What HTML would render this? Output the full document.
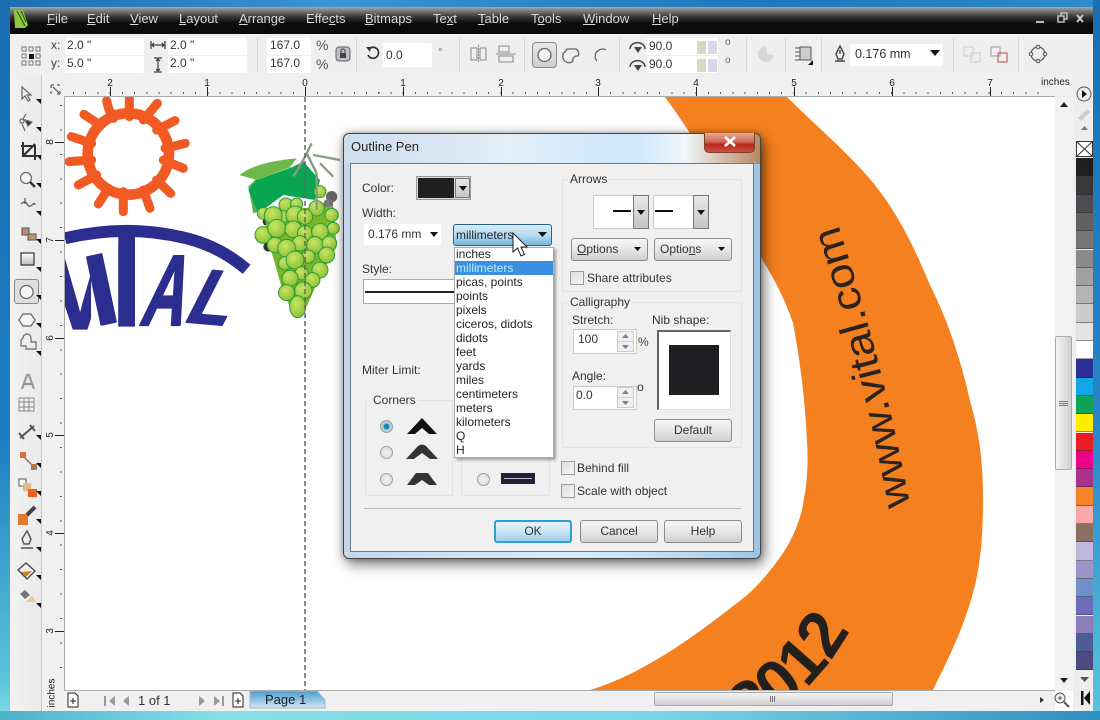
<!DOCTYPE html>
<html><head><meta charset="utf-8"><title>Outline Pen</title>
<style>
html,body{margin:0;padding:0}
body{width:1100px;height:720px;overflow:hidden;position:relative;background:#fff;font-family:"Liberation Sans",sans-serif;font-size:12px;color:#222;filter:blur(.3px)}
div,span.t{position:absolute}
.t{position:absolute;white-space:nowrap;line-height:14px;font-size:12px;color:#333}
.m{top:12px;color:#d8d8d8;font-size:13px}
.m u{text-decoration:underline}
.i{background:#fff;border-radius:1px}
.r{font-size:10px;top:77px;color:#222;transform:translateX(-50%)}
.rv{font-size:10px;left:48px;color:#222;transform:rotate(-90deg)}
.btn{box-sizing:border-box;border:1px solid #8c8c8c;border-radius:3px;background:linear-gradient(#f6f6f6,#e6e6e6 50%,#cfcfcf);text-align:center;line-height:21px;color:#333;font-size:12px}
.grp{box-sizing:border-box;border:1px solid #e2e2e2;border-radius:2px}
.lab{background:#f0f0f0;padding:0 2px}
.li{left:456px;font-size:12px;color:#222}
.sw{left:1076px;width:17px;height:18.3px;box-shadow:inset 0 -1px 0 rgba(40,40,40,.45)}
.cb{box-sizing:border-box;width:14px;height:14px;border:1px solid #9a9a9a;background:linear-gradient(135deg,#ddd,#f6f6f6);border-radius:1px}
.rad{box-sizing:border-box;width:13px;height:13px;border:1px solid #a0a0a0;border-radius:50%;background:radial-gradient(#f4f4f4,#d4d4d4)}
.dd{box-sizing:border-box;background:linear-gradient(#e8e8e8,#c4c4c4);border:1px solid #777}
</style></head><body>

<!-- window frame -->
<div style="left:0;top:0;width:1100px;height:8px;background:linear-gradient(90deg,#1c6eb0,#3a93d4 30%,#1b79bd 70%,#2d8ccb)"></div>
<div style="left:0;top:0;width:10px;height:720px;background:linear-gradient(#1a6fb2,#1b7cc0 60%,#5cc6dc 95%,#86dfe8)"></div>
<div style="left:1093px;top:0;width:7px;height:720px;background:linear-gradient(#1a6fb2,#2a86c8 60%,#5cc6dc)"></div>
<div style="left:0;top:711px;width:1100px;height:9px;background:linear-gradient(90deg,#4bb2cc,#86dfe8 20%,#7ad6e6 60%,#2f8fc0)"></div>

<!-- menu bar -->
<div style="left:10px;top:7px;width:1083px;height:27px;background:linear-gradient(#a8a8a8,#3a3a3a 35%,#0c0c0c 60%,#0a0a0a)"></div>
<svg style="position:absolute;left:13px;top:9px" width="16" height="20" viewBox="0 0 16 20"><path d="M1 1h9l5 15-3 3H2z" fill="#8dc63f"/><path d="M4 2l8 15M8 2l5 11" stroke="#2d5a16" stroke-width="1.2" fill="none"/></svg>
<span class="t m" style="left:47px"><u>F</u>ile</span>
<span class="t m" style="left:87px"><u>E</u>dit</span>
<span class="t m" style="left:130px"><u>V</u>iew</span>
<span class="t m" style="left:179px"><u>L</u>ayout</span>
<span class="t m" style="left:239px"><u>A</u>rrange</span>
<span class="t m" style="left:306px">Effe<u>c</u>ts</span>
<span class="t m" style="left:365px"><u>B</u>itmaps</span>
<span class="t m" style="left:433px">Te<u>x</u>t</span>
<span class="t m" style="left:478px"><u>T</u>able</span>
<span class="t m" style="left:531px">T<u>o</u>ols</span>
<span class="t m" style="left:583px"><u>W</u>indow</span>
<span class="t m" style="left:652px"><u>H</u>elp</span>
<svg style="position:absolute;left:1034px;top:12px" width="56" height="14"><path d="M2 10h8" stroke="#bbb" stroke-width="2"/><path d="M24 4h6v6h-6zM27 4V1h6v6h-3" fill="none" stroke="#bbb" stroke-width="1.6"/><path d="M43 3l6 7M49 3l-6 7" stroke="#ccc" stroke-width="2"/></svg>

<!-- property bar -->
<div style="left:10px;top:34px;width:1083px;height:41px;background:#efefef"></div>
<svg style="position:absolute;left:21px;top:46px" width="20" height="20"><g fill="none" stroke="#777"><rect x="1" y="1" width="4" height="4"/><rect x="8" y="1" width="4" height="4"/><rect x="15" y="1" width="4" height="4"/><rect x="1" y="8" width="4" height="4"/><rect x="15" y="8" width="4" height="4"/><rect x="1" y="15" width="4" height="4"/><rect x="8" y="15" width="4" height="4"/><rect x="15" y="15" width="4" height="4"/></g><rect x="8" y="8" width="5" height="5" fill="#111"/></svg>
<span class="t" style="left:51px;top:38px;color:#444">x:</span><span class="t" style="left:51px;top:56px;color:#444">y:</span>
<div class="i" style="left:65px;top:38px;width:79px;height:17px"></div><div class="i" style="left:65px;top:56px;width:79px;height:17px"></div>
<span class="t" style="left:67px;top:38px">2.0 "</span><span class="t" style="left:67px;top:56px">5.0 "</span>
<div class="i" style="left:168px;top:38px;width:79px;height:17px"></div><div class="i" style="left:168px;top:56px;width:79px;height:17px"></div>
<span class="t" style="left:170px;top:38px">2.0 "</span><span class="t" style="left:170px;top:56px">2.0 "</span>
<svg style="position:absolute;left:150px;top:39px" width="16" height="34"><path d="M1 2v8M15 2v8M2 6h12M4 4L2 6l2 2M12 4l2 2-2 2" fill="none" stroke="#444" stroke-width="1.3"/><path d="M4 19h8M4 33h8M8 20v12M6 22l2-2 2 2M6 30l2 2 2-2" fill="none" stroke="#444" stroke-width="1.3"/></svg>
<div style="left:257px;top:38px;width:1px;height:34px;background:#d8d8d8"></div>
<div class="i" style="left:267px;top:38px;width:44px;height:17px"></div><div class="i" style="left:267px;top:56px;width:44px;height:17px"></div>
<span class="t" style="left:270px;top:38px">167.0</span><span class="t" style="left:270px;top:56px">167.0</span>
<span class="t" style="left:316px;top:38px;font-size:14px;color:#555">%</span><span class="t" style="left:316px;top:57px;font-size:14px;color:#555">%</span>
<svg style="position:absolute;left:335px;top:46px" width="16" height="16"><rect x="1" y="1" width="14" height="14" rx="3" fill="#bdbdc4" stroke="#666"/><rect x="5" y="7" width="6" height="5" fill="#444"/><path d="M6 7V5a2 2 0 014 0v2" fill="none" stroke="#444"/></svg>
<div style="left:356px;top:38px;width:1px;height:34px;background:#d8d8d8"></div>
<svg style="position:absolute;left:365px;top:44px" width="16" height="16"><path d="M4 5a5.500 5.500 0 11-1 6" fill="none" stroke="#333" stroke-width="1.7"/><path d="M1 3l5 0-1 5z" fill="#333"/></svg>
<div class="i" style="left:383px;top:43px;width:49px;height:24px"></div><span class="t" style="left:386px;top:48px">0.0</span>
<span class="t" style="left:438px;top:46px;color:#666;font-size:11px">°</span>
<div style="left:459px;top:38px;width:1px;height:34px;background:#d8d8d8"></div>
<svg style="position:absolute;left:469px;top:44px" width="48" height="20"><g fill="none" stroke="#888"><path d="M2 4h6v12H2zM11 4h6v12h-6z"/><path d="M9.500 1v18" stroke-dasharray="2 1"/><path d="M30 2h10v6H30zM30 12h14v6H30zM27 10h20" /></g></svg>
<div style="left:524px;top:38px;width:1px;height:34px;background:#d8d8d8"></div>
<div style="box-sizing:border-box;left:532px;top:42px;width:25px;height:26px;background:linear-gradient(#e8e8e8,#cfcfcf);border:1px solid #888;border-radius:4px"></div>
<svg style="position:absolute;left:535px;top:45px" width="80" height="20"><path d="M3 10a6.500 6.500 0 1013 0 6.500 6.500 0 10-13 0" fill="#f4f4f4" stroke="#666" stroke-width="1.3"/><path d="M31 6q0-2 2-2h8a5 5 0 012 7l-2 0a4 4 0 00-3 5l-1 1a6 6 0 01-6-11z" fill="none" stroke="#666" stroke-width="1.3"/><path d="M62 16a7 7 0 012-11q4-2 7 0" fill="none" stroke="#666" stroke-width="1.3"/></svg>
<div style="left:619px;top:38px;width:1px;height:34px;background:#d8d8d8"></div>
<svg style="position:absolute;left:628px;top:38px" width="20" height="34"><g fill="none" stroke="#444" stroke-width="1.5"><path d="M2 11a7 6 0 0115 0"/><path d="M2 29a7 6 0 0115 0"/></g><path d="M6 9l4 6 4-6z" fill="#444"/><path d="M6 27l4 6 4-6z" fill="#444"/></svg>
<div class="i" style="left:647px;top:38px;width:71px;height:17px"></div><div class="i" style="left:647px;top:56px;width:71px;height:17px"></div>
<span class="t" style="left:649px;top:39px">90.0</span><span class="t" style="left:649px;top:57px">90.0</span>
<div style="left:697px;top:41px;width:9px;height:13px;background:#d8d8c8"></div><div style="left:708px;top:41px;width:9px;height:13px;background:#d8d8e8"></div>
<div style="left:697px;top:59px;width:9px;height:13px;background:#d8d8c8"></div><div style="left:708px;top:59px;width:9px;height:13px;background:#d8d8e8"></div>
<span class="t" style="left:725px;top:36px;color:#666;font-size:10px">o</span><span class="t" style="left:725px;top:54px;color:#666;font-size:10px">o</span>
<div style="left:746px;top:38px;width:1px;height:34px;background:#d8d8d8"></div>
<svg style="position:absolute;left:757px;top:44px" width="18" height="20"><path d="M9 2a8 8 0 108 9l-7-1z" fill="#d6d6d6"/></svg>
<div style="left:785px;top:38px;width:1px;height:34px;background:#d8d8d8"></div>
<svg style="position:absolute;left:794px;top:44px" width="20" height="22"><rect x="6" y="3" width="11" height="13" fill="#ccc" stroke="#555"/><path d="M1 4h5M1 8h5M1 12h5M1 16h5" stroke="#555"/><path d="M19 16v5h-5z" fill="#111"/></svg>
<div style="left:821px;top:38px;width:1px;height:34px;background:#d8d8d8"></div>
<svg style="position:absolute;left:832px;top:45px" width="16" height="18"><path d="M8 1l4 8-2 5H6L4 9zM8 5v4M3 16h10" fill="none" stroke="#444" stroke-width="1.4"/></svg>
<div class="i" style="left:850px;top:44px;width:93px;height:22px"></div>
<span class="t" style="left:855px;top:47px;font-size:12.500px">0.176 mm</span>
<svg style="position:absolute;left:930px;top:50px" width="10" height="6"><path d="M0 0h10L5 6z" fill="#111"/></svg>
<div style="left:953px;top:38px;width:1px;height:34px;background:#d8d8d8"></div>
<svg style="position:absolute;left:963px;top:46px" width="48" height="18"><g fill="none"><rect x="1" y="1" width="9" height="9" stroke="#ccc"/><rect x="8" y="7" width="9" height="9" stroke="#ccc"/><rect x="28" y="1" width="9" height="9" stroke="#999"/><rect x="35" y="7" width="9" height="9" stroke="#b44"/></g></svg>
<div style="left:1018px;top:38px;width:1px;height:34px;background:#d8d8d8"></div>
<svg style="position:absolute;left:1028px;top:44px" width="20" height="20"><circle cx="10" cy="10" r="7" fill="none" stroke="#555" stroke-width="1.2"/><g fill="#ddd" stroke="#555"><circle cx="10" cy="3" r="1.800"/><circle cx="10" cy="17" r="1.800"/><circle cx="3" cy="10" r="1.800"/><circle cx="17" cy="10" r="1.800"/></g></svg>

<!-- rulers -->
<div style="left:10px;top:75px;width:1083px;height:22px;background:#f0f0f0"></div>
<div style="left:42px;top:75px;width:23px;height:636px;background:#f0f0f0"></div>
<div style="left:64px;top:96px;width:991px;height:1px;background:#aaa"></div>
<div style="left:64px;top:96px;width:1px;height:595px;background:#aaa"></div>
<div style="left:73px;top:92px;width:970px;height:2px;background:repeating-linear-gradient(90deg,#555 0 1px,transparent 1px 12.21px)"></div>
<div style="left:60px;top:105px;width:2px;height:585px;background:repeating-linear-gradient(180deg,#555 0 1px,transparent 1px 24.43px)"></div>
<div style="left:110px;top:87px;width:1px;height:9px;background:#222"></div><div style="left:207px;top:87px;width:1px;height:9px;background:#222"></div><div style="left:305px;top:87px;width:1px;height:9px;background:#222"></div><div style="left:403px;top:87px;width:1px;height:9px;background:#222"></div><div style="left:501px;top:87px;width:1px;height:9px;background:#222"></div><div style="left:598px;top:87px;width:1px;height:9px;background:#222"></div><div style="left:696px;top:87px;width:1px;height:9px;background:#222"></div><div style="left:794px;top:87px;width:1px;height:9px;background:#222"></div><div style="left:892px;top:87px;width:1px;height:9px;background:#222"></div><div style="left:990px;top:87px;width:1px;height:9px;background:#222"></div>
<span class="t r" style="left:110px">2</span><span class="t r" style="left:207px">1</span><span class="t r" style="left:305px">0</span><span class="t r" style="left:403px">1</span><span class="t r" style="left:501px">2</span><span class="t r" style="left:598px">3</span><span class="t r" style="left:696px">4</span><span class="t r" style="left:794px">5</span><span class="t r" style="left:892px">6</span><span class="t r" style="left:990px">7</span>
<span class="t" style="left:1041px;top:76px;font-size:10px;color:#222">inches</span>
<div style="left:55px;top:142px;width:9px;height:1px;background:#222"></div><div style="left:55px;top:240px;width:9px;height:1px;background:#222"></div><div style="left:55px;top:338px;width:9px;height:1px;background:#222"></div><div style="left:55px;top:435px;width:9px;height:1px;background:#222"></div><div style="left:55px;top:533px;width:9px;height:1px;background:#222"></div><div style="left:55px;top:631px;width:9px;height:1px;background:#222"></div>
<span class="t rv" style="top:135px">8</span><span class="t rv" style="top:233px">7</span><span class="t rv" style="top:331px">6</span><span class="t rv" style="top:428px">5</span><span class="t rv" style="top:526px">4</span><span class="t rv" style="top:624px">3</span>
<span class="t rv" style="top:686px;left:38px;font-size:10px">inches</span>
<svg style="position:absolute;left:50px;top:84px" width="12" height="12"><path d="M1 1h3M1 1v3M7 1h3M1 7v3M10 10H7M10 10V7M3 3l6 6" stroke="#444" fill="none"/></svg>

<!-- toolbox -->
<div style="left:10px;top:75px;width:32px;height:636px;background:linear-gradient(90deg,#f2f2f2,#e9e9e9)"></div>
<div style="left:41px;top:75px;width:1px;height:636px;background:#c8c8c8"></div>
<div style="box-sizing:border-box;left:14px;top:279px;width:25px;height:25px;background:#ddd;border:1px solid #888;border-radius:3px"></div>
<svg style="position:absolute;left:10px;top:80px" width="32" height="540">
<g fill="none" stroke="#666" stroke-width="1.200">
<path d="M12 7v12l3-3 3 5 2-1-3-5h4z" fill="#eee"/>
<circle cx="12" cy="41" r="2"/><path d="M13 39l3-5M12 44l3 7"/><path d="M15 40l7 2-4 4z" fill="#333"/>
<path d="M13 62v14h14M11 66h14v14M13 76l12-12" stroke="#333" stroke-width="2"/>
<circle cx="16" cy="98" r="5.500" fill="#f8f8f8"/><path d="M20 102l5 5" stroke="#333" stroke-width="2.400"/>
<path d="M11 124q4-4 6 0t5 1 3 0M15 118v6" stroke="#555"/>
<rect x="12" y="148" width="7" height="7" fill="#c08870"/><rect x="18" y="154" width="8" height="6" fill="#b89870"/>
<rect x="11" y="173" width="13" height="12" fill="url(#g1)" stroke="#333"/>
<circle cx="16.500" cy="212" r="6.500" fill="#f4f4f4"/>
<path d="M13 234h8l4 6-4 6h-8l-4-6z" fill="#f4f4f4"/>
<path d="M13 258a4 4 0 018 0v4h5v7H16v-3h-5v-6z" fill="#eee"/>
</g>
<defs><linearGradient id="g1" x2="0" y2="1"><stop offset="0" stop-color="#fff"/><stop offset="1" stop-color="#bbb"/></linearGradient></defs>
<path d="M12 309l5-14h2l5 14M14 304h8" fill="none" stroke="#999" stroke-width="2.200"/>
<g fill="none" stroke="#888"><rect x="9" y="318" width="15" height="13" fill="#eee"/><path d="M9 322h15M9 327h15M14 318v13M19 318v13"/></g>
<path d="M10 358l14-12M9 353l5 6M20 345l5 6" stroke="#555" stroke-width="2" fill="none"/>
<path d="M13 376l11 11" stroke="#a66" stroke-width="1.500"/><rect x="10" y="372" width="6" height="6" fill="#d86f3a"/><rect x="21" y="384" width="6" height="6" fill="#b07a50"/>
<rect x="9" y="399" width="7" height="7" fill="#fff" stroke="#555"/><rect x="13" y="403" width="8" height="8" fill="#e8b888"/><rect x="18" y="409" width="9" height="8" fill="#e8641e"/>
<rect x="8" y="434" width="10" height="11" fill="#e8792a"/><path d="M17 435l8-8" stroke="#444" stroke-width="4"/>
<path d="M17 451l4 8-2 5h-5l-2-5zM11 468h12" fill="none" stroke="#555" stroke-width="1.500"/>
<path d="M8 490l8-7 9 8-8 8z" fill="#f2efe4" stroke="#444" stroke-width="1.300"/><path d="M11 492l5 5 6-6z" fill="#d8801e"/>
<path d="M10 514l5-4 5 5-5 4z" fill="#777"/><path d="M16 522h10l-4-6z" fill="#e8cc78"/>
<g fill="#111"><path d="M31 24v-5h-5zM31 52v-5h-5zM31 80v-5h-5zM31 108v-5h-5zM31 136v-5h-5zM31 164v-5h-5zM31 192v-5h-5zM31 220v-5h-5zM31 248v-5h-5zM31 276v-5h-5zM31 360v-5h-5zM31 388v-5h-5zM31 416v-5h-5zM31 444v-5h-5zM31 472v-5h-5zM31 500v-5h-5zM31 528v-5h-5z"/></g>
</svg>

<!-- right scrollbar & palette -->
<div style="left:1055px;top:97px;width:18px;height:594px;background:#f2f2f2"></div>
<div style="left:1073px;top:75px;width:20px;height:636px;background:#eeeeee"></div>
<svg style="position:absolute;left:1055px;top:100px" width="18" height="10"><path d="M5 7h8L9 2z" fill="#222"/></svg>
<svg style="position:absolute;left:1055px;top:676px" width="18" height="10"><path d="M5 2h8L9 7z" fill="#222"/></svg>
<div style="box-sizing:border-box;left:1055px;top:336px;width:17px;height:134px;background:linear-gradient(90deg,#f4f4f4,#cfcfcf);border:1px solid #aaa;border-radius:2px"></div>
<div style="left:1059px;top:401px;width:9px;height:1px;background:#777;box-shadow:0 2px #777,0 4px #777"></div>
<svg style="position:absolute;left:1075px;top:84px" width="20" height="50"><circle cx="9" cy="10" r="7" fill="#eee" stroke="#555"/><path d="M7 6l5 4-5 4z" fill="#111"/><path d="M3 34l9-9 3 3-9 9z" fill="#ccc"/><path d="M6 46h7l-3.500-4z" fill="#777"/></svg>
<div style="box-sizing:border-box;left:1076px;top:141px;width:17px;height:16px;background:#fff;border:1.500px solid #333"></div>
<svg style="position:absolute;left:1076px;top:141px" width="17" height="16"><path d="M1 1l15 14M16 1L1 15" stroke="#333"/></svg>
<div class="sw" style="top:158px;background:#1f1f1f"></div><div class="sw" style="top:176.300px;background:#383838"></div><div class="sw" style="top:194.600px;background:#4c4d50"></div><div class="sw" style="top:212.900px;background:#606163"></div><div class="sw" style="top:231.200px;background:#757575"></div><div class="sw" style="top:249.500px;background:#8a8a8c"></div><div class="sw" style="top:267.800px;background:#a0a0a2"></div><div class="sw" style="top:286.100px;background:#b4b4b6"></div><div class="sw" style="top:304.400px;background:#cbcbcb"></div><div class="sw" style="top:322.700px;background:#e3e3e3"></div><div class="sw" style="top:341px;background:#fff"></div><div class="sw" style="top:359.300px;background:#2b2f96"></div><div class="sw" style="top:377.600px;background:#12a6e8"></div><div class="sw" style="top:395.900px;background:#0ea358"></div><div class="sw" style="top:414.200px;background:#ffed00"></div><div class="sw" style="top:432.500px;background:#ec1c24"></div><div class="sw" style="top:450.800px;background:#ec008c"></div><div class="sw" style="top:469.100px;background:#a8328c"></div><div class="sw" style="top:487.400px;background:#f5842a"></div><div class="sw" style="top:505.700px;background:#f9a8a8"></div><div class="sw" style="top:524px;background:#8b6f62"></div><div class="sw" style="top:542.300px;background:#c0b8dc"></div><div class="sw" style="top:560.600px;background:#9b94c8"></div><div class="sw" style="top:578.900px;background:#6f90c8"></div><div class="sw" style="top:597.200px;background:#6c6cba"></div><div class="sw" style="top:615.500px;background:#8a7fba"></div><div class="sw" style="top:633.800px;background:#4d5b96"></div><div class="sw" style="top:652.100px;background:#4d4a80"></div>
<svg style="position:absolute;left:1076px;top:672px" width="17" height="36"><path d="M4 5h9L8.500 10z" fill="#555"/><path d="M5 19v14h2.500V19zM14 19v14l-6-7z" fill="#111"/></svg>

<!-- canvas drawing -->
<svg style="position:absolute;left:0;top:0" width="1100" height="720">
<defs><clipPath id="c"><rect x="65" y="97" width="990" height="593"/></clipPath>
<clipPath id="vc"><rect x="195" y="440" width="78" height="330"/></clipPath>
<clipPath id="tc"><rect x="355" y="440" width="50" height="300"/></clipPath>
<radialGradient id="gr" cx=".4" cy=".35" r=".7"><stop offset="0" stop-color="#c8e464"/><stop offset="1" stop-color="#8cc034"/></radialGradient>
<path id="tp" d="M910 505Q885 370 838 224" fill="none"/>
<path id="tp2" d="M680 760Q800 722 850 630" fill="none"/></defs>
<g clip-path="url(#c)">
<path d="M665 97L787 97C815 125 845 150 870 179C900 215 915 250 930 285C950 325 962 365 970 401C980 435 983 465 983 498C983 525 982 550 977 576C968 620 950 655 933 690L590 690C640 675 690 640 737 603C755 590 770 572 783 553C795 535 802 515 804 498C808 478 808 458 807 440C805 400 800 360 793 323C785 300 775 280 763 261C735 205 700 145 665 97Z" fill="#f58020"/>
<text font-family="Liberation Sans" font-size="41" fill="#2a2320" textLength="290" lengthAdjust="spacingAndGlyphs"><textPath href="#tp">www.vital.com</textPath></text>
<text font-family="Liberation Sans" font-weight="bold" font-size="66" fill="#231f1c" text-anchor="end"><textPath href="#tp2" startOffset="100%">2012</textPath></text>
<g transform="translate(0 80) scale(.3333)">
<g fill="none" stroke="#f15a22" stroke-linecap="round">
<circle cx="385" cy="222" r="122" stroke-width="32"/>
<path stroke-width="27" d="M388 50V110M320 62Q325 90 340 115M252 103L300 135M214 170L275 190M207 245L275 240M235 315L290 285M295 372L325 325M370 395V335M450 385L430 330M512 340L470 300M550 265L490 240M556 190L495 205M525 122L470 150M472 70L430 120"/>
</g>
<path d="M195 475Q380 430 560 475Q660 500 740 568" fill="none" stroke="#2b2e8f" stroke-width="36"/>
<g font-family="Liberation Sans" font-weight="bold" font-size="300" fill="#2b2e8f" stroke="#2b2e8f" stroke-width="7" stroke-linejoin="round">
<g clip-path="url(#vc)"><text transform="translate(150 745) scale(.9 1)">V</text></g>
<text transform="translate(285 738) rotate(-12)">I</text>
<g clip-path="url(#tc)"><text transform="translate(270 738) scale(1.200 1.350)">T</text></g>
<text transform="translate(415 735) skewX(-15) scale(.6 1)">A</text>
<text transform="translate(545 725) rotate(5) skewX(-22) scale(.7 .78)">L</text>
</g>
<path d="M718 285Q770 245 890 235L870 262L770 300Z" fill="#6fb84a"/>
<path d="M745 320L770 295L775 395L760 400Z" fill="#50b050"/>
<path d="M770 300L880 260L910 245L960 300L945 360L850 345L775 400L745 330Z" fill="#0aa550"/>
<circle cx="995" cy="350" r="17" fill="#666"/><circle cx="985" cy="372" r="15" fill="#777"/><circle cx="805" cy="500" r="15" fill="#333"/><circle cx="800" cy="425" r="12" fill="#333"/>
<path d="M790 390L1000 380L1010 500L960 590L920 680L880 700L850 640L810 500Z" fill="#7ab52c"/>
<g fill="url(#gr)" stroke="#2a9d3a" stroke-width="3">
<circle cx="960" cy="335" r="18"/><circle cx="858" cy="375" r="21"/><circle cx="890" cy="372" r="18"/><circle cx="950" cy="385" r="23"/><circle cx="790" cy="400" r="18"/><circle cx="850" cy="410" r="18"/><circle cx="995" cy="405" r="20"/><circle cx="820" cy="407" r="27"/><circle cx="885" cy="405" r="27"/><circle cx="915" cy="410" r="23"/><circle cx="1000" cy="445" r="18"/><circle cx="790" cy="465" r="25"/><circle cx="830" cy="445" r="27"/><circle cx="880" cy="448" r="25"/><circle cx="915" cy="460" r="23"/><circle cx="960" cy="455" r="25"/><circle cx="825" cy="495" r="23"/><circle cx="900" cy="490" r="23"/><circle cx="945" cy="495" r="25"/><circle cx="988" cy="490" r="22"/><circle cx="860" cy="505" r="27"/><circle cx="855" cy="550" r="20"/><circle cx="925" cy="530" r="20"/><circle cx="980" cy="525" r="24"/><circle cx="885" cy="540" r="27"/><circle cx="960" cy="570" r="24"/><circle cx="905" cy="580" r="20"/><circle cx="870" cy="595" r="24"/><circle cx="938" cy="600" r="22"/><circle cx="860" cy="638" r="24"/><circle cx="910" cy="632" r="26"/><ellipse cx="893" cy="680" rx="24" ry="33"/>
</g>
<path d="M935 190L910 240L880 290M920 220L950 280L950 390M940 225L1020 240M960 250L1000 290" fill="none" stroke="#8a9a80" stroke-width="7"/>
</g>
<path d="M305 97V690" stroke="#666" stroke-width="1.500" stroke-dasharray="5 3"/>
</g>
</svg>

<!-- page bar -->
<div style="left:65px;top:690px;width:990px;height:21px;background:#f0f0f0;border-top:1px solid #aaa;box-sizing:border-box"></div>
<svg style="position:absolute;left:65px;top:692px" width="190" height="17"><path d="M3 1h7l3 3v11H3zM5 9h6M8 6v6" fill="#fff" stroke="#222"/><path d="M40 4v10" stroke="#999" stroke-width="2"/><path d="M50 4l-6 5 6 5z" fill="#999"/><path d="M64 4l-6 5 6 5z" fill="#999"/><path d="M134 4l6 5-6 5z" fill="#999"/><path d="M149 4l6 5-6 5z" fill="#999"/><path d="M158 4v10" stroke="#999" stroke-width="2"/><path d="M168 1h7l3 3v11h-10zM170 9h6M173 6v6" fill="#fff" stroke="#222"/></svg>
<span class="t" style="left:138px;top:694px;font-size:13px">1 of 1</span>
<svg style="position:absolute;left:249px;top:691px" width="78" height="18"><path d="M1 0H68L76 9V17H1Z" fill="url(#pg)" stroke="#9ab8cc"/><defs><linearGradient id="pg" x2="0" y2="1"><stop offset="0" stop-color="#4f9cd0"/><stop offset=".5" stop-color="#8cc0e0"/><stop offset="1" stop-color="#d8eaf6"/></linearGradient></defs></svg>
<span class="t" style="left:265px;top:693px;font-size:13px;color:#1a1a1a">Page 1</span>
<div style="box-sizing:border-box;left:654px;top:692px;width:239px;height:14px;background:linear-gradient(#f4f4f4,#cfcfcf);border:1px solid #aaa;border-radius:2px"></div>
<div style="left:770px;top:696px;width:1px;height:6px;background:#777;box-shadow:2px 0 #777,4px 0 #777"></div>
<svg style="position:absolute;left:1040px;top:692px" width="32" height="16"><path d="M0 5l4 3-4 3z" fill="#333"/><circle cx="20" cy="6" r="5" fill="#eee" stroke="#555"/><path d="M18 6h4M20 4v4" stroke="#555"/><path d="M24 10l5 5" stroke="#555" stroke-width="2"/></svg>

<!-- dialog -->
<div style="box-sizing:border-box;left:343px;top:133px;width:418px;height:426px;border:1px solid #444;border-radius:6px;background:linear-gradient(90deg,#c4d8ea,#d8ecfa 55%,#b8d8f2 85%,#9cc4e4);box-shadow:3px 5px 14px rgba(0,0,0,.55),0 0 6px rgba(0,0,0,.3)"></div>
<div style="left:344px;top:134px;width:416px;height:30px;border-radius:6px 6px 0 0;background:linear-gradient(90deg,#cfdeec,#e2eef8 40%,#cfe8fb 70%,#f0f6fb 82%,#b8885c)"></div>
<span class="t" style="left:351px;top:140px;font-size:13px;color:#222">Outline Pen</span>
<div style="box-sizing:border-box;left:704px;top:133px;width:51px;height:20px;border:1px solid #7a4030;border-top:0;border-radius:0 0 5px 5px;background:linear-gradient(#e8a898,#d06a58 45%,#b8281c 60%,#c85040)"></div>
<svg style="position:absolute;left:723px;top:136px" width="14" height="12"><path d="M2 1l10 9M12 1L2 10" stroke="#fff" stroke-width="2.600"/></svg>
<div style="box-sizing:border-box;left:350px;top:163px;width:404px;height:389px;background:#f0f0f0;border:1px solid #6a7a8a"></div>

<span class="t" style="left:362px;top:181px">Color:</span>
<div style="box-sizing:border-box;left:416px;top:176px;width:55px;height:24px;background:#ddd;border:1px solid #999"></div>
<div style="left:418px;top:178px;width:36px;height:20px;background:#1f1f1f"></div>
<div class="dd" style="left:455px;top:178px;width:15px;height:20px"></div>
<svg style="position:absolute;left:459px;top:186px" width="8" height="5"><path d="M0 0h8L4 5z" fill="#111"/></svg>
<span class="t" style="left:362px;top:206px">Width:</span>
<div class="i" style="left:364px;top:224px;width:77px;height:21px"></div>
<span class="t" style="left:368px;top:227px">0.176 mm</span>
<svg style="position:absolute;left:430px;top:232px" width="8" height="5"><path d="M0 0h8L4 5z" fill="#111"/></svg>
<div style="box-sizing:border-box;left:453px;top:224px;width:99px;height:22px;border:1px solid #2c628b;border-radius:3px;background:linear-gradient(#d8ecf8,#b8dcf2 50%,#74b8dc)"></div>
<span class="t" style="left:456px;top:228px;color:#222">millimeters</span>
<svg style="position:absolute;left:538px;top:232px" width="9" height="5"><path d="M0 0h9L4.500 5z" fill="#111"/></svg>
<span class="t" style="left:362px;top:262px">Style:</span>
<div style="box-sizing:border-box;left:363px;top:279px;width:94px;height:25px;background:#fff;border:1px solid #aaa"></div>
<div style="left:365px;top:291px;width:90px;height:1.500px;background:#222"></div>
<span class="t" style="left:362px;top:363px">Miter Limit:</span>

<div class="grp" style="left:365px;top:400px;width:88px;height:96px"></div>
<div class="grp" style="left:461px;top:400px;width:89px;height:96px"></div>
<span class="t lab" style="left:371px;top:393px">Corners</span>
<div class="rad" style="left:380px;top:420px;background:radial-gradient(#1d7ea8 30%,#9cc 40%,#ddd)"></div>
<div class="rad" style="left:380px;top:446px"></div>
<div class="rad" style="left:380px;top:473px"></div>
<svg style="position:absolute;left:405px;top:415px" width="34" height="72"><path d="M17 3L32 19H24L17 13L10 19H2Z" fill="#111"/><path d="M13 31Q17 28 21 31L33 44H25L17 38L9 44H1Z" fill="#333"/><path d="M11 58H23L32 70H24L17 65L10 70H2Z" fill="#333"/></svg>
<div class="rad" style="left:477px;top:473px"></div>
<div style="left:501px;top:473px;width:34px;height:11px;background:#222234"></div>
<div style="left:504px;top:477.500px;width:28px;height:1.500px;background:#b8b8c8"></div>

<!-- dropdown -->
<div style="box-sizing:border-box;left:454px;top:247px;width:100px;height:211px;background:#fff;border:1px solid #aaa;box-shadow:2px 2px 3px rgba(0,0,0,.35)"></div>
<div style="left:455px;top:261px;width:98px;height:14px;background:#3a8fe0"></div>
<span class="t li" style="top:247px">inches</span>
<span class="t li" style="top:261px;color:#b8f0ff">millimeters</span>
<span class="t li" style="top:275px">picas, points</span>
<span class="t li" style="top:289px">points</span>
<span class="t li" style="top:303px">pixels</span>
<span class="t li" style="top:317px">ciceros, didots</span>
<span class="t li" style="top:331px">didots</span>
<span class="t li" style="top:345px">feet</span>
<span class="t li" style="top:359px">yards</span>
<span class="t li" style="top:373px">miles</span>
<span class="t li" style="top:387px">centimeters</span>
<span class="t li" style="top:401px">meters</span>
<span class="t li" style="top:415px">kilometers</span>
<span class="t li" style="top:429px">Q</span>
<span class="t li" style="top:443px">H</span>

<!-- arrows -->
<div class="grp" style="left:562px;top:179px;width:180px;height:113px"></div>
<span class="t lab" style="left:568px;top:172px">Arrows</span>
<div style="box-sizing:border-box;left:593px;top:195px;width:56px;height:34px;background:#fff;border:1px solid #ccc"></div>
<div class="dd" style="left:633px;top:195px;width:16px;height:34px"></div>
<div style="left:613px;top:210px;width:18px;height:2px;background:#111"></div>
<svg style="position:absolute;left:637px;top:210px" width="8" height="5"><path d="M0 0h8L4 5z" fill="#111"/></svg>
<div style="box-sizing:border-box;left:653px;top:195px;width:56px;height:34px;background:#fff;border:1px solid #ccc"></div>
<div class="dd" style="left:693px;top:195px;width:16px;height:34px"></div>
<div style="left:655px;top:210px;width:18px;height:2px;background:#111"></div>
<svg style="position:absolute;left:697px;top:210px" width="8" height="5"><path d="M0 0h8L4 5z" fill="#111"/></svg>
<div class="btn" style="left:571px;top:238px;width:77px;height:23px;text-align:left;padding-left:5px"><u>O</u>ptions</div>
<div class="btn" style="left:654px;top:238px;width:78px;height:23px;text-align:left;padding-left:5px">Optio<u>n</u>s</div>
<svg style="position:absolute;left:634px;top:247px" width="7" height="4"><path d="M0 0h7L3.500 4z" fill="#111"/></svg>
<svg style="position:absolute;left:718px;top:247px" width="7" height="4"><path d="M0 0h7L3.500 4z" fill="#111"/></svg>
<div class="cb" style="left:570px;top:271px"></div>
<span class="t" style="left:587px;top:271px">Share attributes</span>

<!-- calligraphy -->
<div class="grp" style="left:562px;top:302px;width:180px;height:146px"></div>
<span class="t lab" style="left:568px;top:295px">Calligraphy</span>
<span class="t" style="left:572px;top:313px">Stretch:</span>
<span class="t" style="left:652px;top:313px">Nib shape:</span>
<div style="box-sizing:border-box;left:573px;top:329px;width:64px;height:25px;background:#fff;border:1px solid #ccc"></div>
<span class="t" style="left:578px;top:332px">100</span>
<svg style="position:absolute;left:617px;top:331px" width="17" height="21"><rect x=".5" y=".5" width="16" height="20" fill="#f0f0f0" stroke="#ccc"/><path d="M.5 10.500h16" stroke="#ccc"/><path d="M5 7h7L8.500 3z" fill="#78809a"/><path d="M5 14h7l-3.500 4z" fill="#78809a"/></svg>
<span class="t" style="left:638px;top:335px;color:#444">%</span>
<span class="t" style="left:572px;top:369px">Angle:</span>
<div style="box-sizing:border-box;left:573px;top:386px;width:64px;height:24px;background:#fff;border:1px solid #ccc"></div>
<span class="t" style="left:576px;top:388px">0.0</span>
<svg style="position:absolute;left:617px;top:387px" width="17" height="21"><rect x=".5" y=".5" width="16" height="20" fill="#f0f0f0" stroke="#ccc"/><path d="M.5 10.500h16" stroke="#ccc"/><path d="M5 7h7L8.500 3z" fill="#78809a"/><path d="M5 14h7l-3.500 4z" fill="#78809a"/></svg>
<span class="t" style="left:637px;top:380px;color:#333">o</span>
<div style="box-sizing:border-box;left:657px;top:330px;width:74px;height:80px;background:#fff;border-left:2px solid #666;border-top:2px solid #666;border-right:1px solid #ddd;border-bottom:1px solid #ddd"></div>
<div style="left:669px;top:345px;width:50px;height:50px;background:#1f1f21"></div>
<div class="btn" style="left:654px;top:419px;width:78px;height:23px">Default</div>

<div class="cb" style="left:561px;top:461px"></div>
<span class="t" style="left:577px;top:461px">Behind fill</span>
<div class="cb" style="left:561px;top:484px"></div>
<span class="t" style="left:577px;top:484px">Scale with object</span>
<div style="left:364px;top:508px;width:377px;height:1px;background:#b8b8b8"></div>
<div class="btn" style="left:494px;top:520px;width:78px;height:23px;border:2px solid #2c9fd4;background:linear-gradient(#e8f4fb,#c8e4f4 50%,#a0d0ea);line-height:19px">OK</div>
<div class="btn" style="left:580px;top:520px;width:78px;height:23px">Cancel</div>
<div class="btn" style="left:664px;top:520px;width:78px;height:23px">Help</div>

<!-- cursor -->
<svg style="position:absolute;left:510px;top:231px" width="20" height="28"><path d="M3 2V21L7.500 17L11 25L14.500 23.500L11 16H17Z" fill="#fff" stroke="#222" stroke-width="1"/></svg>
</body></html>
